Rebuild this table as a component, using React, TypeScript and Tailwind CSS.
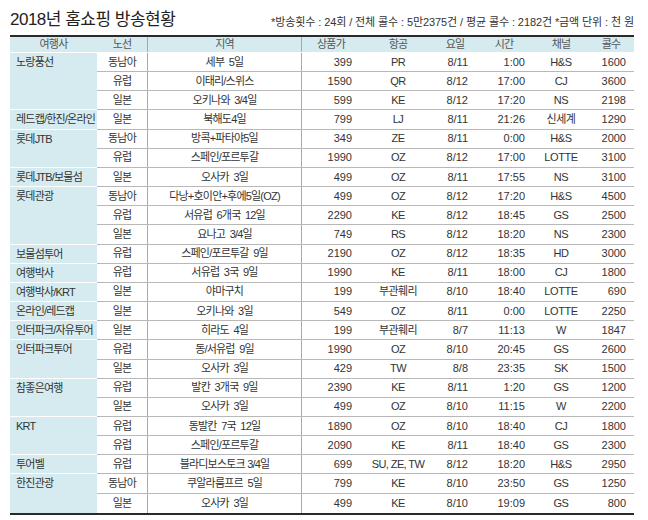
import React from "react";

type Row = [string, string, string, string, string, string, string, string];
type Group = { a: string; rows: Row[] };

const groups: Group[] = [
  { a: "노랑풍선", rows: [
    ["동남아", "세부  5일", "399", "PR", "8/11", "1:00", "H&S", "1600"],
    ["유럽", "이태리/스위스", "1590", "QR", "8/12", "17:00", "CJ", "3600"],
    ["일본", "오키나와  3/4일", "599", "KE", "8/12", "17:20", "NS", "2198"],
  ] },
  { a: "레드캡/한진/온라인", rows: [["일본", "북해도4일", "799", "LJ", "8/11", "21:26", "신세계", "1290"]] },
  { a: "롯데JTB", rows: [
    ["동남아", "방콕+파타야5일", "349", "ZE", "8/11", "0:00", "H&S", "2000"],
    ["유럽", "스페인/포르투갈", "1990", "OZ", "8/12", "17:00", "LOTTE", "3100"],
  ] },
  { a: "롯데JTB/보물섬", rows: [["일본", "오사카  3일", "499", "OZ", "8/11", "17:55", "NS", "3100"]] },
  { a: "롯데관광", rows: [
    ["동남아", "다낭+호이안+후에5일(OZ)", "499", "OZ", "8/12", "17:20", "H&S", "4500"],
    ["유럽", "서유럽  6개국  12일", "2290", "KE", "8/12", "18:45", "GS", "2500"],
    ["일본", "요나고  3/4일", "749", "RS", "8/12", "18:20", "NS", "2300"],
  ] },
  { a: "보물섬투어", rows: [["유럽", "스페인/포르투갈  9일", "2190", "OZ", "8/12", "18:35", "HD", "3000"]] },
  { a: "여행박사", rows: [["유럽", "서유럽  3국  9일", "1990", "KE", "8/11", "18:00", "CJ", "1800"]] },
  { a: "여행박사/KRT", rows: [["일본", "야마구치", "199", "부관훼리", "8/10", "18:40", "LOTTE", "690"]] },
  { a: "온라인/레드캡", rows: [["일본", "오키나와  3일", "549", "OZ", "8/11", "0:00", "LOTTE", "2250"]] },
  { a: "인터파크/자유투어", rows: [["일본", "히라도  4일", "199", "부관훼리", "8/7", "11:13", "W", "1847"]] },
  { a: "인터파크투어", rows: [
    ["유럽", "동/서유럽  9일", "1990", "OZ", "8/10", "20:45", "GS", "2600"],
    ["일본", "오사카  3일", "429", "TW", "8/8", "23:35", "SK", "1500"],
  ] },
  { a: "참좋은여행", rows: [
    ["유럽", "발칸  3개국  9일", "2390", "KE", "8/11", "1:20", "GS", "1200"],
    ["일본", "오사카  3일", "499", "OZ", "8/10", "11:15", "W", "2200"],
  ] },
  { a: "KRT", rows: [
    ["유럽", "동발칸  7국  12일", "1890", "OZ", "8/10", "18:40", "CJ", "1800"],
    ["유럽", "스페인/포르투갈", "2090", "KE", "8/11", "18:40", "GS", "2300"],
  ] },
  { a: "투어벨", rows: [["유럽", "블라디보스토크 3/4일", "699", "SU, ZE, TW", "8/12", "18:20", "H&S", "2950"]] },
  { a: "한진관광", rows: [
    ["동남아", "쿠알라룸프르  5일", "799", "KE", "8/10", "23:50", "GS", "1250"],
    ["일본", "오사카  3일", "499", "KE", "8/10", "19:09", "GS", "800"],
  ] },
];

const FONT = { fontFamily: '"Liberation Sans", "Noto Sans CJK KR", sans-serif' };

function DataRow({ r, last }: { r: Row; last: boolean }) {
  return (
    <div className={`flex h-[19.17px] items-center ${last ? "" : "border-b border-[#b8b8b8]"}`}>
      <div className="w-[50px] text-center tracking-[-0.8px]">{r[0]}</div>
      <div className="w-[155px] self-stretch flex items-center justify-center border-x border-[#a8a8a8] whitespace-pre tracking-[-0.8px]">{r[1]}</div>
      <div className="w-[58px] text-right pr-[8px]">{r[2]}</div>
      <div className="w-[76px] text-center tracking-[-0.6px]">{r[3]}</div>
      <div className="w-[38px] text-right pr-[6px]">{r[4]}</div>
      <div className="w-[60px] text-right pr-[9px]">{r[5]}</div>
      <div className="w-[54px] text-center tracking-[-0.4px]">{r[6]}</div>
      <div className="w-[46px] text-right pr-[8px]">{r[7]}</div>
    </div>
  );
}

export default function App() {
  const total = groups.reduce((s, g) => s + g.rows.length, 0);
  let idx = 0;
  return (
    <div className="w-[648px] h-[520px] bg-white text-[#333] pl-[10px] pr-[14px]" style={FONT}>
      <div className="h-[35px] flex items-end justify-between pb-[7px]">
        <div className="text-[17px] leading-none text-[#222] tracking-[-0.5px]">2018년 홈쇼핑 방송현황</div>
        <div className="text-[11px] leading-none tracking-[-0.1px] text-[#333]">
          *방송횟수 : 24회 / 전체 콜수 : 5만2375건 / 평균 콜수 : 2182건 *금액 단위 : 천 원
        </div>
      </div>
      <div className="border-t-2 border-b-2 border-[#2a2a2a] text-[11px] leading-none">
        <div className="flex h-[16px] items-center bg-[#d6ebf0] text-[#555] border-b border-white tracking-[-0.8px]">
          <div className="w-[87px] text-center">여행사</div>
          <div className="w-[50px] text-center">노선</div>
          <div className="w-[155px] self-stretch flex items-center justify-center border-x border-[#a8a8a8]">지역</div>
          <div className="w-[58px] text-center">상품가</div>
          <div className="w-[76px] text-center">항공</div>
          <div className="w-[38px] text-center">요일</div>
          <div className="w-[60px] text-center">시간</div>
          <div className="w-[54px] text-center">채널</div>
          <div className="w-[46px] text-center">콜수</div>
        </div>
        {groups.map((g, gi) => (
          <div key={gi} className="flex">
            <div className={`w-[87px] bg-[#d6ebf0] pl-[6px] pt-[4px] tracking-[-0.8px] whitespace-nowrap ${gi === groups.length - 1 ? "" : "border-b border-white"}`}>
              {g.a}
            </div>
            <div className="flex-1">
              {g.rows.map((r, ri) => {
                idx += 1;
                return <DataRow key={ri} r={r} last={idx === total} />;
              })}
            </div>
          </div>
        ))}
      </div>
    </div>
  );
}
